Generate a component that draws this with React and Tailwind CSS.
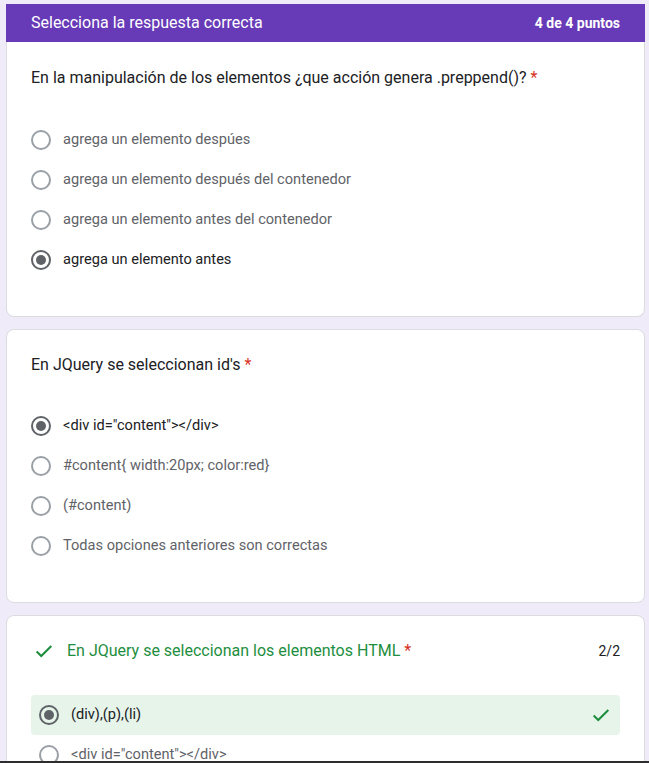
import React from "react";

const Radio = ({ checked }) => (
  <span
    className={`flex h-5 w-5 shrink-0 items-center justify-center rounded-full border-2 ${
      checked ? "border-[#5f6368]" : "border-[#9aa0a6]"
    }`}
  >
    {checked && <span className="h-[10px] w-[10px] rounded-full bg-[#5f6368]" />}
  </span>
);

const Check = ({ className }) => (
  <svg viewBox="0 0 24 24" className={className} fill="none" stroke="currentColor" strokeWidth="2.2">
    <path d="M4 12.5l5 5L20 6.5" />
  </svg>
);

const Option = ({ label, checked }) => (
  <div className="flex h-10 items-center">
    <Radio checked={checked} />
    <span className={`ml-3 text-[14.6px] ${checked ? "text-[#202124]" : "text-[#5f6368]"}`}>{label}</span>
  </div>
);

const Question = ({ title, options, selected, first }) => (
  <div
    className={`bg-white border border-[#dadce0] px-[24px] ${
      first ? "rounded-b-lg border-t-0 pt-6 pb-[36px]" : "rounded-lg pt-[23px] pb-[36px]"
    }`}
  >
    <div className="text-[16px] leading-6 text-[#202124]">
      {title} <span className="text-[#d93025]">*</span>
    </div>
    <div className={first ? "mt-[30px]" : "mt-[29px]"}>
      {options.map((o, i) => (
        <Option key={i} label={o} checked={i === selected} />
      ))}
    </div>
  </div>
);

export default function App() {
  return (
    <div
      className="flex h-[763px] flex-col overflow-hidden bg-[#f0ebf8]"
      style={{ fontFamily: "Roboto, 'Liberation Sans', sans-serif" }}
    >
      <div className="flex-1 overflow-hidden pl-[6px] pr-[4px] pt-[4px]">
        <div className="flex h-[38px] items-center justify-between bg-[#673ab7] px-[25px]">
          <span className="text-[16px] text-white">Selecciona la respuesta correcta</span>
          <span className="text-[14px] font-bold text-white">4 de 4 puntos</span>
        </div>
        <Question
          first
          title="En la manipulación de los elementos ¿que acción genera .preppend()?"
          options={[
            "agrega un elemento despúes",
            "agrega un elemento después del contenedor",
            "agrega un elemento antes del contenedor",
            "agrega un elemento antes",
          ]}
          selected={3}
        />
        <div className="mt-[12px]">
          <Question
            title="En JQuery se seleccionan id's"
            options={[
              '<div id="content"></div>',
              "#content{ width:20px; color:red}",
              "(#content)",
              "Todas opciones anteriores son correctas",
            ]}
            selected={0}
          />
        </div>
        <div className="mt-[12px] rounded-lg border border-[#dadce0] bg-white px-[24px] pt-[23px] pb-6">
          <div className="flex items-center justify-between">
            <div className="flex items-center">
              <Check className="ml-[2px] h-[22px] w-[22px] text-[#1e8e3e]" />
              <span className="ml-[12px] text-[16px] leading-6 text-[#1e8e3e]">
                En JQuery se seleccionan los elementos HTML <span className="text-[#d93025]">*</span>
              </span>
            </div>
            <span className="text-[14px] text-[#202124]">2/2</span>
          </div>
          <div className="mt-[32px] flex h-10 items-center rounded bg-[#e6f4ea] pl-[8px] pr-[8px]">
            <Radio checked />
            <span className="ml-3 flex-1 text-[14.6px] text-[#202124]">(div),(p),(li)</span>
            <Check className="h-[22px] w-[22px] text-[#1e8e3e]" />
          </div>
          <div className="flex h-10 items-center pl-[8px]">
            <Radio />
            <span className="ml-3 text-[14.6px] text-[#5f6368]">{'<div id="content"></div>'}</span>
          </div>
        </div>
      </div>
      <div className="h-[2px] bg-[#2d2d2d]" />
    </div>
  );
}
